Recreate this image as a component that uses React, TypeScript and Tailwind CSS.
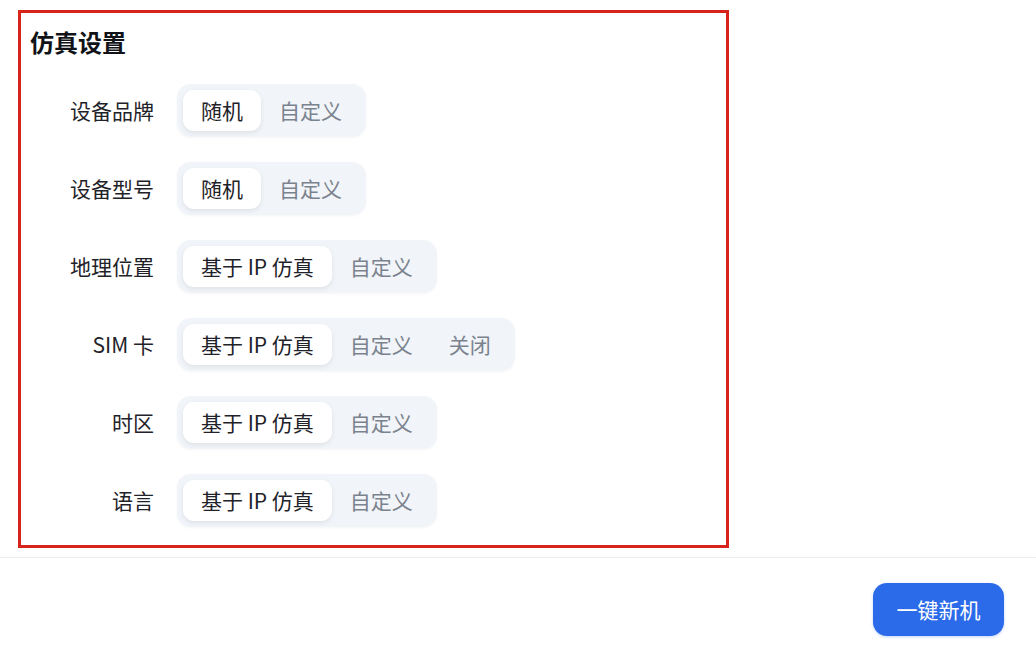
import React from "react";

type Row = { label: string; options: string[] };

const rows: Row[] = [
  { label: "设备品牌", options: ["随机", "自定义"] },
  { label: "设备型号", options: ["随机", "自定义"] },
  { label: "地理位置", options: ["基于 IP 仿真", "自定义"] },
  { label: "SIM 卡", options: ["基于 IP 仿真", "自定义", "关闭"] },
  { label: "时区", options: ["基于 IP 仿真", "自定义"] },
  { label: "语言", options: ["基于 IP 仿真", "自定义"] },
];

function Segmented({ options }: { options: string[] }) {
  return (
    <div className="flex items-center rounded-[14px] bg-[#f1f4f8] p-[6px] shadow-[0_1px_3px_rgba(0,0,0,0.04)]">
      {options.map((o, i) =>
        i === 0 ? (
          <div
            key={o}
            className="flex h-[41px] items-center rounded-[11px] bg-white px-[18px] text-[21px] text-[#1f2329] shadow-[0_2px_5px_rgba(0,0,0,0.08)]"
          >
            {o}
          </div>
        ) : (
          <div
            key={o}
            className="flex h-[41px] items-center px-[18px] text-[21px] text-[#7a828e]"
          >
            {o}
          </div>
        )
      )}
    </div>
  );
}

export default function App() {
  return (
    <div
      className="flex h-[654px] w-[1036px] flex-col bg-white"
      style={{ fontFamily: '"Noto Sans CJK SC", "Noto Sans", sans-serif' }}
    >
      <div className="pl-[18px] pt-[10px]">
        <div className="w-[711px] border-[3px] border-[#d7241b] pb-[18px] pl-[9px] pt-[13px]">
          <div className="text-[24px] font-bold leading-[32px] text-[#111318]">仿真设置</div>
          <div className="mt-[26px] flex flex-col gap-[25px]">
            {rows.map((r) => (
              <div key={r.label} className="flex items-center">
                <div className="w-[124px] text-right text-[21px] text-[#1f2329]">{r.label}</div>
                <div className="ml-[23px]">
                  <Segmented options={r.options} />
                </div>
              </div>
            ))}
          </div>
        </div>
      </div>
      <div className="mt-[9px] flex flex-1 justify-end border-t border-[#eeeeee] pr-[32px] pt-[25px] shadow-[0_-2px_4px_rgba(0,0,0,0.02)]">
        <button className="h-[53px] w-[131px] rounded-[14px] bg-[#2b6ae9] text-[21px] text-white shadow-[0_1px_3px_rgba(43,106,233,0.3)]">
          一键新机
        </button>
      </div>
    </div>
  );
}
